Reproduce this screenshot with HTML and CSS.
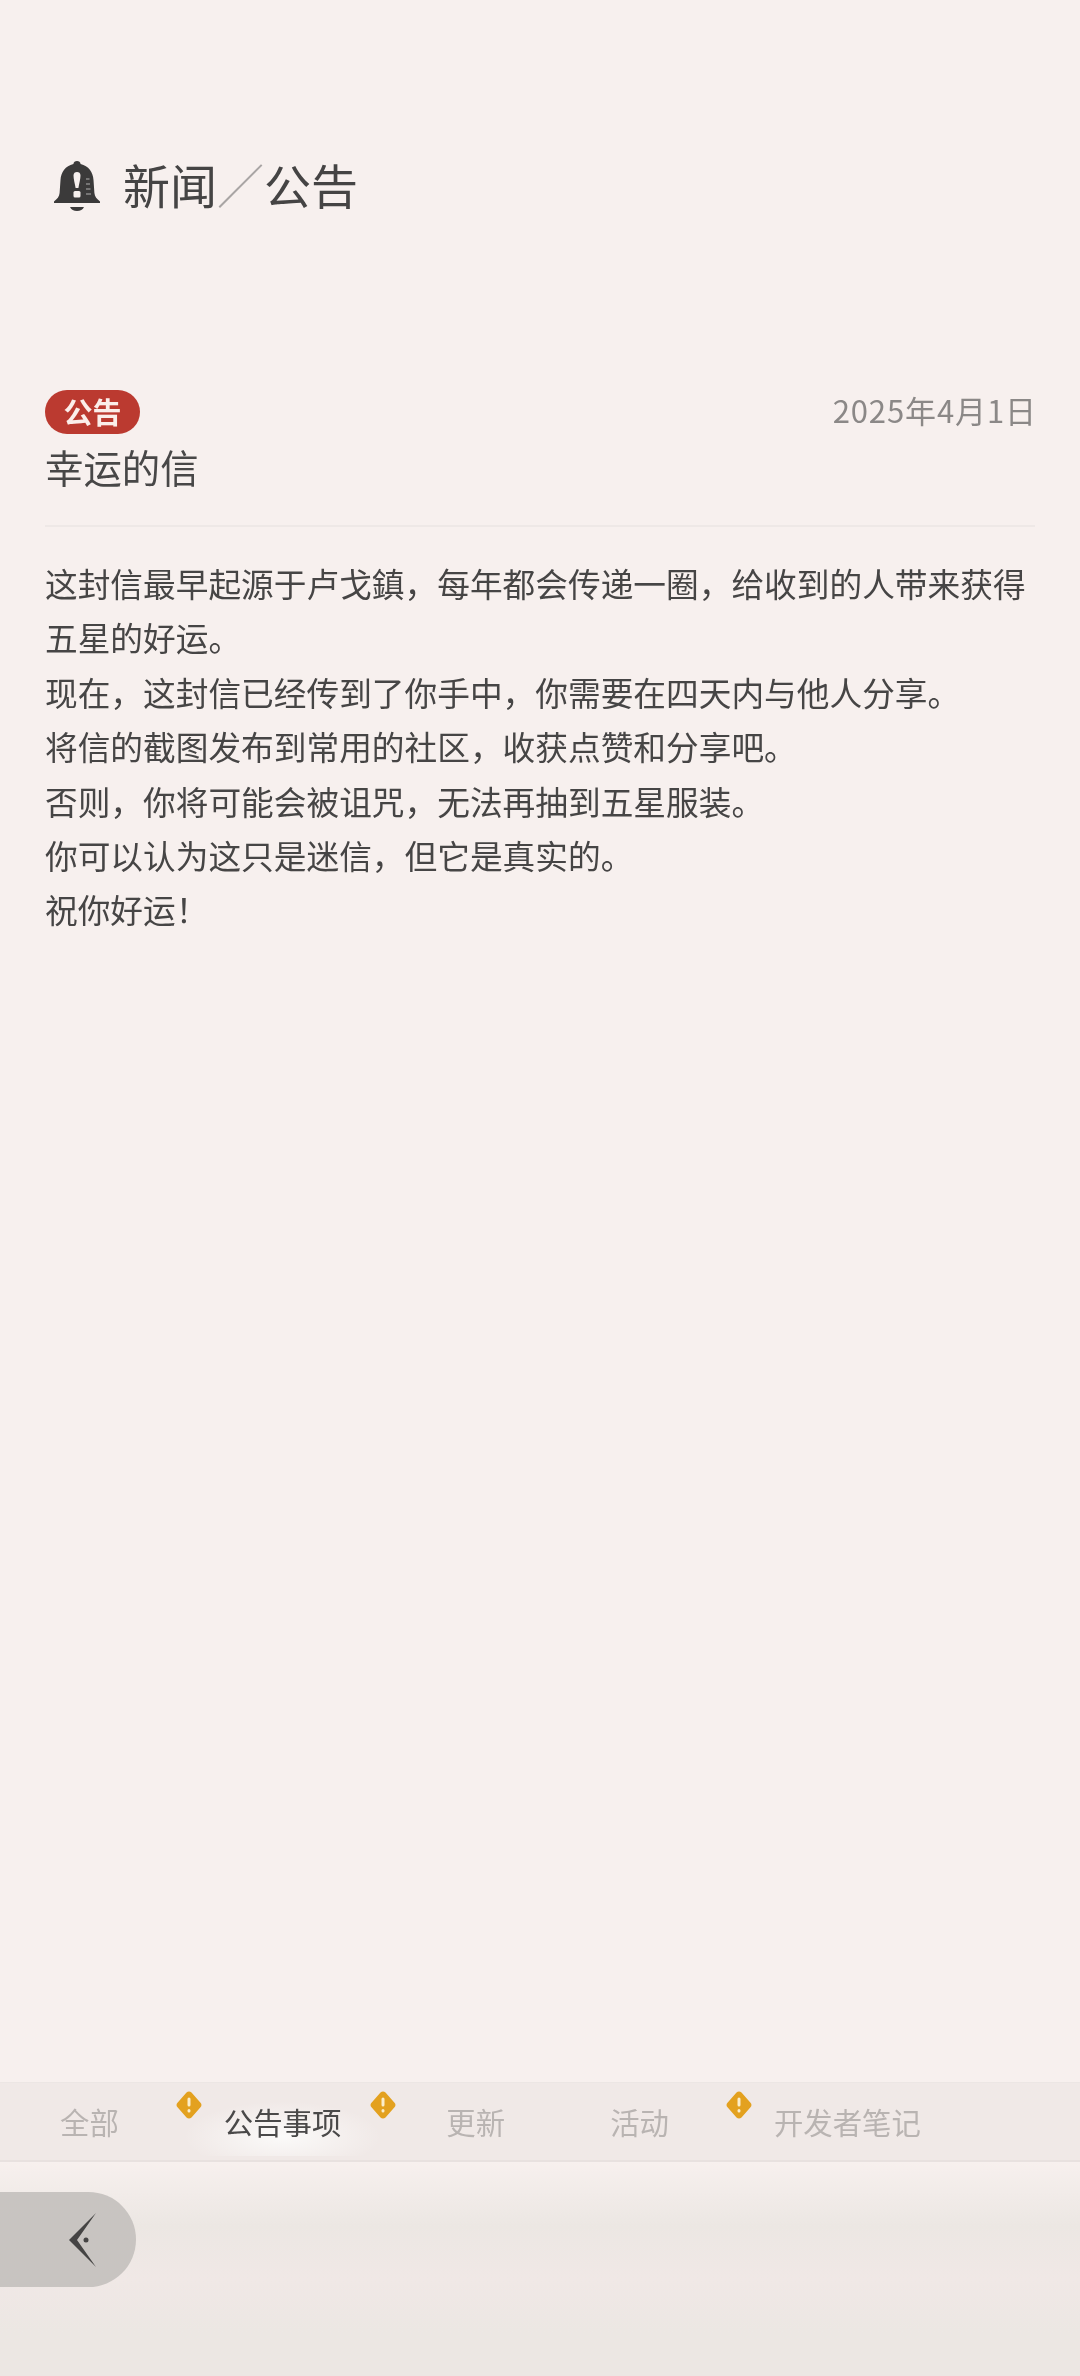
FILE: index.html

```html
<!DOCTYPE html>
<html lang="zh-CN">
<head>
  <meta charset="UTF-8">
  <title>新闻／公告</title>
  <link rel="stylesheet" href="styles.css">
</head>
<body>
  <div class="page">
    <header class="page-head">
      <svg class="bell" width="46" height="54" viewBox="0 0 46 54">
        <path fill="#3b3a3a" d="M23 0c2 0 3.400 1.200 3.600 3 8 1.800 12.400 8 12.900 16l.9 13c.3 3.600 2.400 6 5.600 8.400v1.600H0v-1.600c3.200-2.400 5.300-4.800 5.600-8.400l.9-13c.5-8 4.900-14.200 12.900-16C19.600 1.200 21 0 23 0z"/>
        <path fill="#f7f0ee" d="M19.500 14.500c0-2.400 1.500-3.500 3.500-3.500s3.500 1.100 3.500 3.500c0 3.500-1.400 8.500-2.100 12.500h-2.800c-.7-4-2.100-9-2.100-12.500z"/>
        <rect fill="#f7f0ee" x="19.500" y="30" width="7" height="6.500" rx="1.500"/>
        <path stroke="#8b8989" stroke-width="1.500" d="M32 18h3.500M32 23h4M32 28h4.500M32 33h5"/>
        <path fill="#3b3a3a" d="M16 46h14c-1 2.600-3.800 4-7 4s-6-1.400-7-4z"/>
      </svg>
      <h1 class="page-title">新闻<span class="slash">／</span>公告</h1>
    </header>

    <main class="article">
      <div class="article-meta">
        <div>
          <span class="tag">公告</span>
          <h2 class="article-title">幸运的信</h2>
        </div>
        <span class="article-date">2025年4月1日</span>
      </div>
      <div class="article-body">
        <p>这封信最早起源于卢戈鎮，每年都会传递一圈，给收到的人带来获得五星的好运。</p>
        <p>现在，这封信已经传到了你手中，你需要在四天内与他人分享。</p>
        <p>将信的截图发布到常用的社区，收获点赞和分享吧。</p>
        <p>否则，你将可能会被诅咒，无法再抽到五星服装。</p>
        <p>你可以认为这只是迷信，但它是真实的。</p>
        <p>祝你好运！</p>
      </div>
    </main>

    <nav class="tabs">
      <div class="tab">全部
        <svg class="tab-badge" width="26" height="28" viewBox="0 0 26 28"><use href="#warn"/></svg>
      </div>
      <div class="tab tab-active">公告事项
        <svg class="tab-badge" width="26" height="28" viewBox="0 0 26 28"><use href="#warn"/></svg>
      </div>
      <div class="tab">更新</div>
      <div class="tab">活动
        <svg class="tab-badge" width="26" height="28" viewBox="0 0 26 28"><use href="#warn"/></svg>
      </div>
      <div class="tab">开发者笔记</div>
    </nav>

    <footer class="page-foot">
      <button class="back" type="button" aria-label="返回">
        <svg width="28" height="54" viewBox="0 0 28 54">
          <path fill="#454444" d="M0 27 27 0 8 27l19 27z"/>
          <circle fill="#454444" cx="17" cy="27" r="2.500"/>
        </svg>
      </button>
    </footer>
  </div>

  <svg class="defs" width="0" height="0">
    <symbol id="warn" viewBox="0 0 26 28">
      <path fill="#e3a11f" d="M10.500 1.500c1.400-1.400 3.600-1.400 5 0l9 10.200c1.300 1.300 1.300 3.300 0 4.600l-9 10.200c-1.400 1.400-3.600 1.400-5 0l-9-10.200c-1.300-1.300-1.300-3.300 0-4.600z"/>
      <rect fill="#fbeecb" x="11.500" y="6.500" width="3" height="9" rx="1.500"/>
      <rect fill="#fbeecb" x="11.500" y="18" width="3" height="3.500" rx="1.500"/>
    </symbol>
  </svg>
</body>
</html>
```

FILE: styles.css

```css
* { box-sizing: border-box; }
html, body { margin: 0; padding: 0; }
body { font-family: "Noto Sans CJK SC", "Noto Sans", sans-serif; background-color: #f7f0ee; color: #444343; }

/* the reference is a soft, slightly blurred capture */
.page { display: flex; flex-direction: column; height: 2376px; overflow: hidden; filter: blur(0.45px); }

.page-head { display: flex; align-items: center; gap: 23px; padding: 132px 0 0 54px; height: 236px; }
.bell { flex: none; margin-top: 8px; }
.page-title { margin: 0; font-size: 47px; font-weight: 400; line-height: 60px; color: #454444; }
.slash { color: #a9a5a4; }

.article { flex: 1; padding: 154px 45px 0 45px; }
.article-meta { display: flex; justify-content: space-between; align-items: flex-start; padding-bottom: 35px; border-bottom: 2px solid #eee8e6; }
.tag { display: block; width: 95px; height: 44px; border-radius: 22px; background-color: #bb3a30; color: #fbeeea; font-size: 29px; font-weight: 700; line-height: 42px; text-align: center; }
.article-title { margin: 8px 0 0 0; font-size: 38.4px; font-weight: 400; line-height: 48px; color: #484747; }
.article-date { font-size: 31px; letter-spacing: 0.9px; line-height: 42px; color: #8b8887; margin: -1px -2px 0 0; }

.article-body { padding-top: 29px; font-size: 32.7px; line-height: 54.4px; color: #464545; }
.article-body p { margin: 0; }

.tabs { display: flex; align-items: center; gap: 105px; height: 80px; padding: 0 0 0 60px; background-color: #f0e9e7; border-top: 1px solid #ece6e4; border-bottom: 2px solid #e8e1df; font-size: 29.4px; color: #b9b4b2; }
.tab { position: relative; line-height: 42px; white-space: nowrap; margin-top: -1px; }
.tab-badge { position: absolute; top: -9px; right: -83px; }
.tab-active { color: #4a4949; z-index: 0; }
.tab-active::before { content: ""; position: absolute; inset: -14px -40px -14px -40px; z-index: -1; background: radial-gradient(ellipse 50% 50% at 50% 72%, #fbfaf9 0%, rgba(251, 250, 249, 0) 100%); }
.tab-active .tab-badge { right: -55px; }

.page-foot { height: 214px; padding-top: 30px; background: linear-gradient(#f7f0ee, #ece7e3 30%, #f0e8e6 55%, #ece7e3 80%); }
.back { display: flex; align-items: center; justify-content: flex-end; width: 136px; height: 95px; padding: 0 39px 0 0; border: none; border-radius: 0 48px 48px 0; background-color: #c8c4c1; }

.defs { position: absolute; }
```
